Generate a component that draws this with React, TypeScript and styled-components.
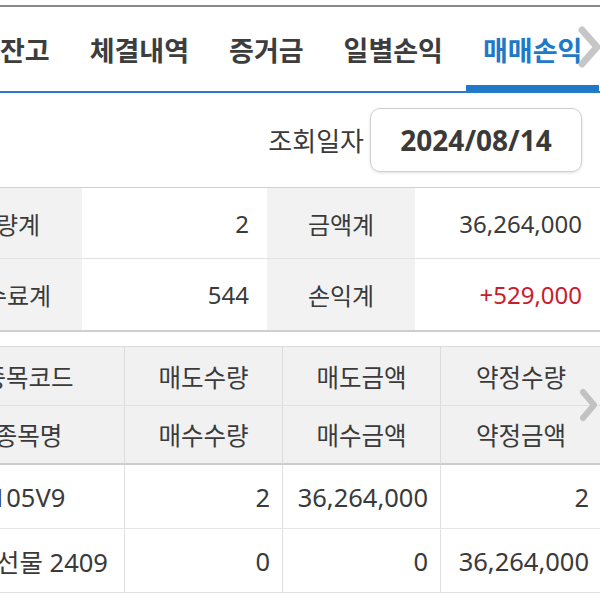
import React from 'react';
import styled, { createGlobalStyle } from 'styled-components';

const GlobalStyle = createGlobalStyle`
  body {
    margin: 0;
    overflow: hidden;
    background: #ffffff;
    font-family: 'Noto Sans', 'Noto Sans CJK KR', sans-serif;
    color: #3a3a3a;
  }
`;

const TABS = ['잔고', '체결내역', '증거금', '일별손익', '매매손익'];

const SUMMARY = [
  { label: '수량계', value: '2', label2: '금액계', value2: '36,264,000' },
  { label: '수수료계', value: '544', label2: '손익계', value2: '+529,000', profit: true },
];

const HEADERS = [
  ['종목코드', '매도수량', '매도금액', '약정수량'],
  ['종목명', '매수수량', '매수금액', '약정금액'],
];

const ROWS = [
  ['105V9', '2', '36,264,000', '2'],
  ['미니선물 2409', '0', '0', '36,264,000'],
];

function Chevron({ width, height }: { width: number; height: number }) {
  return (
    <svg width={width} height={height} viewBox={`0 0 ${width} ${height}`}>
      <polyline
        points={`4,4 ${width - 5},${height / 2} 4,${height - 4}`}
        fill="none"
        stroke="#c2c2c2"
        strokeWidth={width > 20 ? 7 : 6}
        strokeLinecap="round"
        strokeLinejoin="round"
      />
    </svg>
  );
}

export default function App() {
  return (
    <Page>
      <GlobalStyle />
      <TopRule />
      <TabBar>
        <TabRow>
          {TABS.map((tab, i) => (
            <TabItem key={tab} $active={i === TABS.length - 1}>
              {tab}
            </TabItem>
          ))}
        </TabRow>
        <TabArrow>
          <Chevron width={24} height={42} />
        </TabArrow>
      </TabBar>

      <DateRow>
        <DateLabel>조회일자</DateLabel>
        <DateBox>2024/08/14</DateBox>
      </DateRow>

      <SummaryTable>
        {SUMMARY.map((row) => (
          <React.Fragment key={row.label}>
            <SummaryLabel>{row.label}</SummaryLabel>
            <SummaryValue>{row.value}</SummaryValue>
            <SummaryLabel>{row.label2}</SummaryLabel>
            <SummaryValue $profit={row.profit}>{row.value2}</SummaryValue>
          </React.Fragment>
        ))}
      </SummaryTable>

      <TradeTable>
        {HEADERS.map((row, r) =>
          row.map((cell) => (
            <HeadCell key={cell} $last={r === HEADERS.length - 1}>
              {cell}
            </HeadCell>
          )),
        )}
        {ROWS.map((row) =>
          row.map((cell, c) => (
            <BodyCell key={`${row[0]}-${c}`} $first={c === 0}>
              {cell}
            </BodyCell>
          )),
        )}
        <TableArrow>
          <Chevron width={20} height={34} />
        </TableArrow>
      </TradeTable>
    </Page>
  );
}

const Page = styled.div`
  width: 600px;
  height: 600px;
  overflow: hidden;
`;

const TopRule = styled.div`
  height: 2px;
  margin-top: 5px;
  background: #8a8a8a;
`;

const TabBar = styled.div`
  position: relative;
  height: 84px;
  border-bottom: 2px solid #2a7bc6;
`;

const TabRow = styled.div`
  display: flex;
  gap: 0;
  height: 100%;
  margin-left: -17px;
`;

const TabItem = styled.div<{ $active?: boolean }>`
  display: flex;
  align-items: center;
  padding: 0 17px;
  margin-right: 6px;
  white-space: nowrap;
  font-size: 27px;
  font-weight: 700;
  color: ${({ $active }) => ($active ? '#1f78c8' : '#3d3d3d')};
  box-shadow: ${({ $active }) => ($active ? 'inset 0 -6px 0 #1f78c8' : 'none')};
`;

const TabArrow = styled.div`
  position: absolute;
  top: 19px;
  right: -2px;
  opacity: 0.92;
`;

const DateRow = styled.div`
  display: flex;
  align-items: center;
  justify-content: flex-end;
  gap: 6px;
  height: 94px;
  padding-right: 18px;
`;

const DateLabel = styled.span`
  font-size: 26px;
  color: #3a3a3a;
`;

const DateBox = styled.div`
  display: flex;
  align-items: center;
  justify-content: center;
  width: 210px;
  height: 62px;
  border: 1px solid #cfcfcf;
  border-radius: 10px;
  box-shadow: 0 1px 3px rgba(0, 0, 0, 0.12);
  font-size: 28px;
  font-weight: 700;
  color: #3a3a3a;
`;

const SummaryTable = styled.div`
  display: grid;
  grid-template-columns: 150px 185px 148px 185px;
  grid-auto-rows: 71px;
  width: 668px;
  margin-left: -68px;
  border-top: 1px solid #d0d0d0;
  border-bottom: 2px solid #cfcfcf;

  & > div:nth-child(-n + 4) {
    border-bottom: 1px solid #e2e2e2;
  }
`;

const SummaryLabel = styled.div`
  display: flex;
  align-items: center;
  justify-content: center;
  background: #f2f2f2;
  font-size: 24px;
  white-space: nowrap;
`;

const SummaryValue = styled.div<{ $profit?: boolean }>`
  display: flex;
  align-items: center;
  justify-content: flex-end;
  padding-right: 18px;
  font-size: 24px;
  color: ${({ $profit }) => ($profit ? '#c8202a' : '#3a3a3a')};
`;

const TradeTable = styled.div`
  position: relative;
  display: grid;
  grid-template-columns: 192px 158px 158px 160px;
  grid-template-rows: 59px 59px 64px 63px;
  width: 668px;
  margin-top: 14px;
  margin-left: -67px;
  border-top: 1px solid #dadada;
  border-bottom: 1px solid #e0e0e0;
`;

const HeadCell = styled.div<{ $last?: boolean }>`
  display: flex;
  align-items: center;
  justify-content: center;
  background: #f1f1f1;
  font-size: 24.5px;
  white-space: nowrap;
  border-right: 1px solid #dcdcdc;
  border-bottom: ${({ $last }) => ($last ? '2px solid #cdcdcd' : '1px solid #e0e0e0')};

  &:nth-child(4n) {
    border-right: none;
  }
`;

const BodyCell = styled.div<{ $first?: boolean }>`
  display: flex;
  align-items: center;
  justify-content: ${({ $first }) => ($first ? 'center' : 'flex-end')};
  padding-right: ${({ $first }) => ($first ? '0' : '12px')};
  font-size: 25.5px;
  white-space: nowrap;
  border-right: 1px solid #e0e0e0;
  border-bottom: 1px solid #e6e6e6;

  &:nth-child(4n) {
    border-right: none;
  }

  &:nth-last-child(-n + 5) {
    border-bottom: none;
  }
`;

const TableArrow = styled.div`
  position: absolute;
  top: 41px;
  right: 2px;
`;
